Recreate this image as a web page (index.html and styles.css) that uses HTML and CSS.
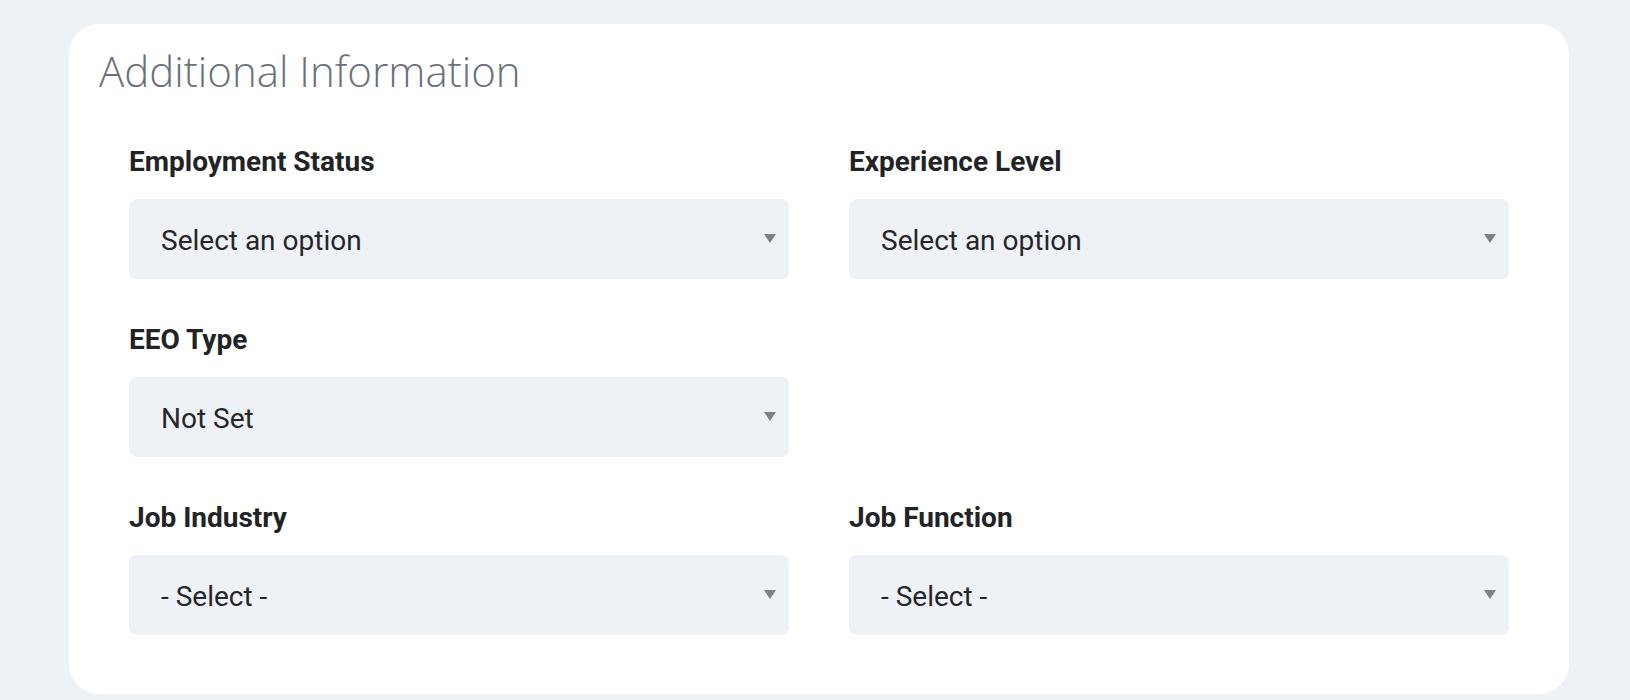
FILE: index.html
```html
<!DOCTYPE html>
<html lang="en">
<head>
    <meta charset="UTF-8">
    <title>Additional Information</title>
    <link rel="stylesheet" href="styles.css">
</head>
<body>
<div class="page">
    <section class="card">
        <h2 class="card-title">Additional Information</h2>
        <form class="form-grid" autocomplete="off">
            <div class="field">
                <label class="label" for="employmentStatus">Employment Status</label>
                <div class="select-wrap">
                    <select id="employmentStatus" name="employmentStatus">
                        <option value="" selected>Select an option</option>
                    </select>
                </div>
            </div>
            <div class="field">
                <label class="label" for="experienceLevel">Experience Level</label>
                <div class="select-wrap">
                    <select id="experienceLevel" name="experienceLevel">
                        <option value="" selected>Select an option</option>
                    </select>
                </div>
            </div>
            <div class="field">
                <label class="label" for="eeoType">EEO Type</label>
                <div class="select-wrap">
                    <select id="eeoType" name="eeoType">
                        <option value="" selected>Not Set</option>
                    </select>
                </div>
            </div>
            <div class="field field-empty"></div>
            <div class="field">
                <label class="label" for="jobIndustry">Job Industry</label>
                <div class="select-wrap">
                    <select id="jobIndustry" name="jobIndustry">
                        <option value="" selected>- Select -</option>
                    </select>
                </div>
            </div>
            <div class="field">
                <label class="label" for="jobFunction">Job Function</label>
                <div class="select-wrap">
                    <select id="jobFunction" name="jobFunction">
                        <option value="" selected>- Select -</option>
                    </select>
                </div>
            </div>
        </form>
    </section>
</div>
</body>
</html>
```

FILE: styles.css
```css
body {
    margin: 0;
    background: #eef1f5;
    font-family: Roboto, "Liberation Sans", sans-serif;
}
.page {
    padding: 24px 61px 6px 69px;
}
.card {
    background: #fff;
    border-radius: 30px;
    padding: 22px 30px 59px;
}
.card-title {
    margin: 0;
    font-family: "Open Sans", sans-serif;
    font-weight: 300;
    font-size: 42px;
    line-height: 1.2;
    color: #6a6f7d;
}
.form-grid {
    display: grid;
    grid-template-columns: 1fr 1fr;
    column-gap: 60px;
    row-gap: 43px;
    margin: 48px 30px 0;
}
.label {
    display: block;
    font-size: 28px;
    line-height: 36px;
    font-weight: 700;
    color: #222327;
    margin-bottom: 19px;
}
.select-wrap {
    position: relative;
}
.select-wrap::after {
    content: "";
    position: absolute;
    right: 13px;
    top: 35px;
    border-left: 6px solid transparent;
    border-right: 6px solid transparent;
    border-top: 9px solid #808080;
    pointer-events: none;
}
select {
    -webkit-appearance: none;
    appearance: none;
    display: block;
    width: 100%;
    height: 80px;
    padding: 3px 40px 0 32px;
    border: 0;
    border-radius: 8px;
    background: #eef1f5;
    font-family: Roboto, "Liberation Sans", sans-serif;
    font-size: 28px;
    color: #25262a;
    outline: none;
}
```
